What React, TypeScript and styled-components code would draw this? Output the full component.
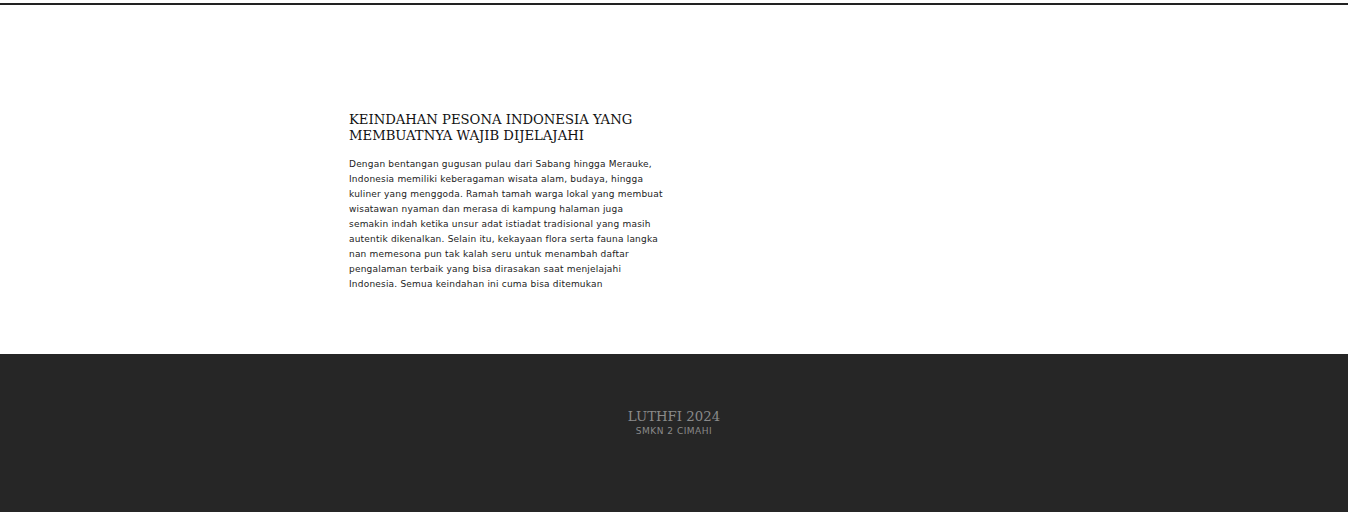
import React from "react";
import styled, { createGlobalStyle } from "styled-components";

const Global = createGlobalStyle`
  html, body { margin: 0; padding: 0; background: #fff; }
`;

const Page = styled.div`
  display: flex;
  flex-direction: column;
  min-height: 512px;
`;

const TopBar = styled.div`
  margin-top: 3px;
  height: 2px;
  background: #222;
`;

const Main = styled.main`
  height: 349px;
  display: flex;
  padding-left: 349px;
  padding-top: 107px;
  box-sizing: border-box;
`;

const Article = styled.article`
  width: 315px;
`;

const Title = styled.h2`
  margin: 0 0 13px;
  font-family: "DejaVu Serif", Georgia, serif;
  font-weight: normal;
  font-size: 13.2px;
  line-height: 16px;
  color: #111;
`;

const Body = styled.p`
  margin: 0;
  font-family: "DejaVu Sans", Verdana, sans-serif;
  font-size: 9px;
  letter-spacing: 0.2px;
  line-height: 15px;
  color: #222;
`;

const Footer = styled.footer`
  flex: 1;
  background: #262626;
  display: flex;
  flex-direction: column;
  align-items: center;
  padding-top: 55px;
`;

const Brand = styled.div`
  font-family: "DejaVu Serif", Georgia, serif;
  font-size: 13.3px;
  line-height: 16px;
  color: #8a8a8a;
`;

const School = styled.div`
  font-family: "DejaVu Sans", Verdana, sans-serif;
  font-size: 9px;
  letter-spacing: 0.5px;
  line-height: 12px;
  color: #8a8a8a;
`;

export default function App() {
  return (
    <Page>
      <Global />
      <TopBar />
      <Main>
        <Article>
          <Title>KEINDAHAN PESONA INDONESIA YANG MEMBUATNYA WAJIB DIJELAJAHI</Title>
          <Body>
            Dengan bentangan gugusan pulau dari Sabang hingga Merauke, Indonesia memiliki keberagaman wisata alam, budaya, hingga kuliner yang menggoda. Ramah tamah warga lokal yang membuat wisatawan nyaman dan merasa di kampung halaman juga semakin indah ketika unsur adat istiadat tradisional yang masih autentik dikenalkan. Selain itu, kekayaan flora serta fauna langka nan memesona pun tak kalah seru untuk menambah daftar pengalaman terbaik yang bisa dirasakan saat menjelajahi Indonesia. Semua keindahan ini cuma bisa ditemukan
          </Body>
        </Article>
      </Main>
      <Footer>
        <Brand>LUTHFI 2024</Brand>
        <School>SMKN 2 CIMAHI</School>
      </Footer>
    </Page>
  );
}
